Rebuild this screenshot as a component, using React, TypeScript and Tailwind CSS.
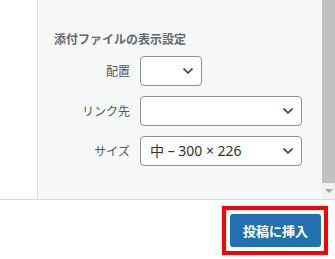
import type { ReactNode } from 'react'

function Chevron() {
  return (
    <svg width="12" height="8" viewBox="0 0 12 8" className="shrink-0">
      <path d="M1.5 1.5l4.5 4.5 4.5-4.5" fill="none" stroke="#50575e" strokeWidth="1.8" />
    </svg>
  )
}

function Row({ label, children }: { label: string; children: ReactNode }) {
  return (
    <div className="flex items-center gap-[10px]">
      <span className="w-[76px] text-right text-[12px] leading-[18px] text-[#50575e]">{label}</span>
      {children}
    </div>
  )
}

function Select({ width, value }: { width: string; value?: string }) {
  return (
    <div
      className={`${width} flex h-[30px] items-center justify-between rounded-[4px] border border-[#8c8f94] bg-white pl-[9px] pr-[7px]`}
    >
      <span className="text-[14px] leading-none text-[#2c3338]" style={{ fontFamily: '"Noto Sans", "Noto Sans CJK JP", sans-serif' }}>
        {value}
      </span>
      <Chevron />
    </div>
  )
}

export default function App() {
  return (
    <div className="w-[335px] h-[259px] overflow-hidden bg-white" style={{ fontFamily: '"Noto Sans CJK JP", sans-serif' }}>
      <div className="flex h-[200px] border-b border-[#dcdcde]">
        <div className="w-[37px]" />
        {/* Settings panel */}
        <div className="flex-1 border-l border-[#dcdcde] bg-[#f6f7f7] pl-4 pt-[30px]">
          <h2 className="mb-[8px] text-[12px] font-bold leading-[18px] text-[#646970]">添付ファイルの表示設定</h2>
          <div className="flex flex-col gap-[10px]">
            <Row label="配置">
              <Select width="w-[62px]" />
            </Row>
            <Row label="リンク先">
              <Select width="w-[162px]" />
            </Row>
            <Row label="サイズ">
              <Select width="w-[162px]" value="中 – 300 × 226" />
            </Row>
          </div>
        </div>
        {/* Scrollbar */}
        <div className="flex w-[13px] flex-col">
          <div className="flex-1 bg-[#c1c1c1]" />
          <div className="flex h-[16px] items-start justify-center bg-[#f1f1f1] pt-[6px]">
            <div className="h-0 w-0 border-x-[4px] border-t-[4px] border-x-transparent border-t-[#a3a3a3]" />
          </div>
        </div>
      </div>
      {/* Footer */}
      <div className="flex justify-end pr-[7px] pt-[6px]">
        <div className="border-4 border-[#ff0000] py-1 pl-1 pr-[3px]">
          <button className="flex h-[33px] w-[91px] items-center justify-center rounded-[3px] bg-[#2271b1] text-[13px] font-bold text-white">
            投稿に挿入
          </button>
        </div>
      </div>
    </div>
  )
}
